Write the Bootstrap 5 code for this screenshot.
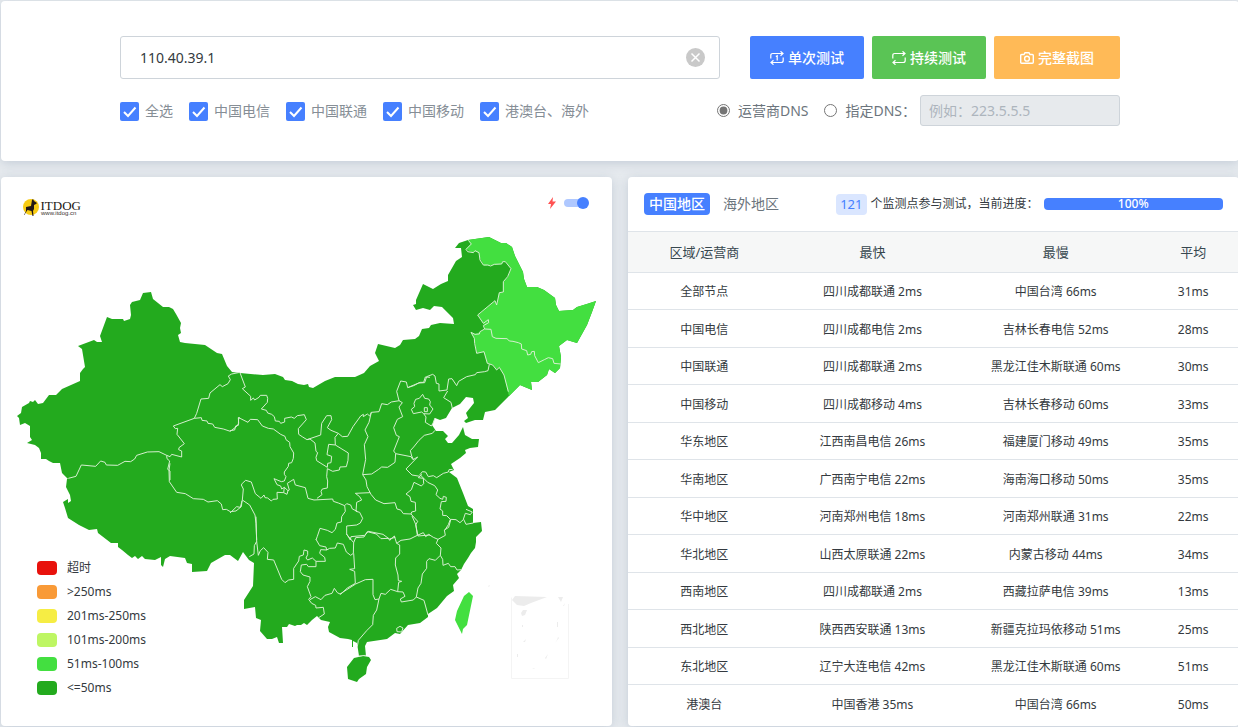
<!DOCTYPE html>
<html lang="zh-CN">
<head>
<meta charset="utf-8">
<meta name="viewport" content="width=device-width, initial-scale=1">
<title>ITDOG</title>
<link href="https://cdn.jsdelivr.net/npm/bootstrap@5.3.0/dist/css/bootstrap.min.css" rel="stylesheet">
<style>
body{font-family:"Noto Sans","Noto Sans CJK SC",sans-serif;font-size:14px;line-height:20px;background:#e7ebef;color:#343a40;overflow-x:hidden}
.page-wrap{margin:0 -1px 0 1px;padding:1px 0}
.panel{background:#fff;border-radius:4px;box-shadow:0 2px 12px rgba(110,130,155,.3)}
.search-panel{padding:35px 16px}
.search-inner{max-width:1000px}
.ip-box{flex:0 1 600px}
.ip-box .form-control{height:43px;padding:8px 48px 8px 19px;font-size:14px;border-color:#ced4da;border-radius:3px;color:#343a40}
.clear-btn{position:absolute;right:15px;top:12px;width:19px;height:19px;padding:0;border:0;background:none;display:flex}
.act{height:43px;border:0;border-radius:2px;color:#fff;font-size:14px;font-weight:500;display:inline-flex;align-items:center;gap:4px;padding:0 20px}
.act:hover{color:#fff}
.act-blue{background:#4680ff}.act-green{background:#5ac455}.act-gold{background:#ffba57;padding:0 26px}
.opts{min-height:31px;margin-top:16px}
.isp-list{padding-top:6px}
.opts label{color:#868e96}
.opts .dns{color:#6c757d}
.opts input[type=checkbox]{width:19px;height:19px;margin:0 6px 0 0;border:0;border-radius:2px}
.opts input[type=checkbox]:checked{background-color:#4680ff;background-image:url("data:image/svg+xml,%3csvg xmlns='http://www.w3.org/2000/svg' viewBox='0 0 19 19'%3e%3cpath d='M4 10l4 4 7.500-8.500' fill='none' stroke='white' stroke-width='2'/%3e%3c/svg%3e")}
.opts input[type=radio]{width:13px;height:13px;margin:0 8px 0 0;accent-color:#757575}
.dns-input{width:200px;height:31px;font-size:14px;padding:4px 8px;border-radius:3px;border-color:#ced4da}
.dns-input:disabled{background:#e7eaed}
.dns-input::placeholder{color:#adb5bd}
.map-tools{position:absolute;right:23px;top:19px;height:14px}
.map-switch{appearance:none;width:21px;height:8px;border-radius:4px;background:#afc8ff;position:relative;margin:0 4px 0 0}
.map-switch::after{content:"";position:absolute;right:-4px;top:-2px;width:12px;height:12px;border-radius:50%;background:#4680ff}
.legend-list{position:absolute;left:36px;bottom:26px;margin:0;font-size:12px;line-height:24px}
.swatch{width:20px;height:14px;border-radius:4px;margin-right:10px}
.stat-head{height:54px;padding:0 16px;font-size:12px}
.tab{border:0;height:22px;border-radius:4px;font-size:14px;line-height:20px;padding:0 5px;background:none;color:#6c757d}
.tab.active{background:#4680ff;color:#fff;font-weight:500}
.count{background:#dae6ff;color:#4680ff;border-radius:4px;font-size:13px;line-height:21px;padding:0 4px;margin-right:4px}
.prog{height:12px;flex:0 0 31%;margin-left:5px;overflow:visible}
.prog .progress-bar{background:#4680ff;border-radius:4px;font-size:12px;line-height:12px;font-weight:500;overflow:visible}
.stats{table-layout:fixed;text-align:center;font-size:12px;line-height:18px;--bs-table-bg:transparent}
.stats>:not(caption)>*>*{border-color:#dfe4e9;border-width:1px 0 0;padding:10px 4px 8px;color:#343a40;white-space:nowrap}
.stats>tbody>tr:nth-child(even)>*{padding-top:11px}
.stats>thead>tr>*{background:#f6f7f7;font-size:13px;font-weight:400;padding:11px 4px;color:#37474f}
.stats .w-a{width:25%}.stats .w-b{width:30%}.stats .w-c{width:15%}
.border-line{fill:none;stroke:#d5efcf;stroke-width:3;stroke-linejoin:round}
</style>
<script src="https://cdn.jsdelivr.net/npm/bootstrap@5.3.0/dist/js/bootstrap.bundle.min.js"></script>
</head>
<body>
<div class="page-wrap d-flex flex-column gap-3">
<form class="panel search-panel">
 <div class="search-inner mx-auto">
  <div class="d-flex flex-wrap justify-content-between">
   <div class="ip-box position-relative">
    <input class="form-control" type="text" value="110.40.39.1" aria-label="IP">
    <button class="clear-btn" type="button" aria-label="清除"><svg width="19" height="19" viewBox="0 0 19 19"><circle cx="9.500" cy="9.500" r="9.500" fill="#c9c9c9"/><path d="M5.500 5.500l8 8m0-8l-8 8" stroke="#fff" stroke-width="1.500"/></svg></button>
   </div>
   <div class="d-flex gap-2">
    <button class="btn act act-blue" type="button"><svg width="14" height="14" viewBox="0 0 14 14" fill="none" stroke="#fff" stroke-width="1.200"><path d="M.8 7.500V4.500Q.8 2.500 2.800 2.500H13M10.500.3L13 2.500L10.500 4.700M13.200 6.500v3q0 2-2 2H1M3.500 9.300L1 11.500l2.500 2.200M5.800 5.500L7.200 4.800V9.600"/></svg>单次测试</button>
    <button class="btn act act-green" type="button"><svg width="14" height="14" viewBox="0 0 14 14" fill="none" stroke="#fff" stroke-width="1.200"><path d="M.8 7.500V4.500Q.8 2.500 2.800 2.500H13M10.500.3L13 2.500L10.500 4.700M13.200 6.500v3q0 2-2 2H1M3.500 9.300L1 11.500l2.500 2.200"/></svg>持续测试</button>
    <button class="btn act act-gold" type="button"><svg width="14" height="14" viewBox="0 0 14 14" fill="none" stroke="#fff" stroke-width="1.400"><path d="M1.700 3.500H4L5 1.700H9L10 3.500H12.300Q13.300 3.500 13.300 4.500V11.300Q13.300 12.300 12.300 12.300H1.700Q.7 12.300.7 11.300V4.500Q.7 3.500 1.700 3.500Z"/><circle cx="7" cy="7.700" r="2.400"/></svg>完整截图</button>
   </div>
  </div>
  <div class="opts d-flex flex-wrap justify-content-between align-items-start">
   <div class="isp-list d-flex flex-wrap gap-3">
    <label class="d-flex align-items-center"><input class="form-check-input" type="checkbox" checked>全选</label>
    <label class="d-flex align-items-center"><input class="form-check-input" type="checkbox" checked>中国电信</label>
    <label class="d-flex align-items-center"><input class="form-check-input" type="checkbox" checked>中国联通</label>
    <label class="d-flex align-items-center"><input class="form-check-input" type="checkbox" checked>中国移动</label>
    <label class="d-flex align-items-center"><input class="form-check-input" type="checkbox" checked>港澳台、海外</label>
   </div>
   <div class="d-flex align-items-center">
    <label class="dns d-flex align-items-center me-3"><input type="radio" name="dns" checked>运营商DNS</label>
    <label class="dns d-flex align-items-center"><input type="radio" name="dns">指定DNS：</label>
    <input class="form-control dns-input ms-1" type="text" placeholder="例如：223.5.5.5" aria-label="指定DNS" disabled>
   </div>
  </div>
 </div>
</form>

<div class="row gx-3 gy-3">
<section class="col-12 col-lg-6">
 <div class="panel h-100 position-relative">
 <svg class="d-block w-100" viewBox="1 177 611 549" role="img" aria-label="中国地图">
  <circle cx="31" cy="207" r="8" fill="#f8cc14"/>
  <path d="M24 215l2-4v-4l5-1 1-6 1-1 1 2 3 2-1 1-2 1v4l-1 2 .5 5h-1l-1-5-4-1-2 3-1 2z" fill="#231815"/>
  <text x="40.500" y="210" font-family="Liberation Serif" font-size="13" fill="#231815">ITDOG</text>
  <text x="41" y="215" font-family="Liberation Sans" font-size="6" fill="#3b3330">www.itdog.cn</text>
  <path fill="#23aa1e" d="M68 479L62 473 60 463 53 463 49 461 46 459 41 459 41 453 39 448 35 445 31 444 27 443 32 440 30 437 30 426 25 423 20 425 19 418 17 416 21 413 22 407 29 403 30 401 33 402 35 400 38 404 43 403 49 395 56 395 62 389 80 381 80 373 83 369 85 367 82 349 78 346 94 340 97 342 102 342 100 336 107 317 112 319 123 319 124 321 130 319 131 315 130 305 132 302 140 300 143 293 151 292 153 299 158 303 163 307 169 307 173 309 176 314 181 323 180 328 181 333 178 335 180 342 185 343 205 345 217 353 222 354 227 366 232 372 240 373 263 375 275 374 283 377 285 380 292 381 298 384 304 385 308 384 309 387 313 388 325 381 335 377 355 377 364 373 370 366 379 361 375 353 378 344 395 348 400 345 403 340 415 339 419 336 422 329 429 328 431 325 440 323 454 324 453 318 442 307 434 306 430 310 423 308 416 310 413 305 416 304 416 300 423 284 433 289 441 284 448 281 448 275 456 261 462 257 461 248 455 248 459 243 468 240 489 237 501 243 506 243 512 247 515 256 523 272 524 279 527 287 537 287 544 290 555 298 556 305 559 311 573 310 577 307 587 304 596 301 592 312 587 325 577 343 567 340 559 346 561 357 560 368 555 373 549 369 547 375 538 382 531 382 532 390 520 385 509 396 495 410 485 412 483 420 475 420 466 423 464 421 468 418 466 413 474 403 473 398 466 397 460 404 452 408 446 418 440 420 435 418 432 425 436 431 443 431 448 436 445 439 448 443 452 443 459 435 463 427 465 435 472 439 479 439 478 447 470 448 465 450 466 453 460 458 451 464 454 470 449 472 457 478 463 493 468 506 473 509 473 523 481 522 482 531 476 537 476 542 475 548 471 553 468 558 464 564 461 570 457 574 459 578 453 585 454 591 447 596 437 608 428 614 428 617 420 623 408 625 400 634 395 633 387 639 367 642 365 646 366 656 359 656 357 643 353 641 353 647 352 647 352 640 348 639 340 638 329 632 328 627 330 622 321 620 317 616 312 620 307 625 304 623 301 625 297 625 295 626 289 624 287 627 282 627 283 643 279 643 277 637 272 639 267 639 260 631 261 620 256 618 255 607 244 609 244 600 253 586 254 563 249 560 243 552 238 561 230 555 225 555 211 563 207 571 192 572 192 564 187 563 185 558 170 556 165 559 163 567 161 565 161 557 155 560 145 559 142 556 138 559 135 556 132 558 128 555 122 550 118 547 118 543 111 543 98 533 97 529 89 530 79 525 68 518 65 508 63 502 68 499 68 503 71 501 70 495 66 487 67 479Z"/>
  <path fill="#43df40" d="M468 240L471 244 466 249 473 253 475 251 479 253 480 258 484 266 502 264 503 261 506 262 511 269 508 277 503 282 503 292 499 293 497 305 495 301 478 315 483 323 485 329 480 332 475 334 471 332 474 338 475 343 477 353 484 352 487 363 493 365 497 370 499 367 504 375 508 392 509 396 520 385 532 390 531 382 538 382 547 375 549 369 555 373 560 368 561 357 559 346 567 340 577 343 587 325 592 312 596 301 577 307 573 310 559 311 556 305 555 298 544 290 537 287 527 287 524 279 523 272 515 256 512 247 506 243 501 243 489 237Z"/>
  <path fill="#23aa1e" d="M354 658L363 656 369 657 371 660 367 667 366 674 359 679 357 682 348 679 347 667Z"/>
  <path fill="#43df40" d="M469 592L473 596 467 625 463 629 462 634 455 620 457 611 464 596Z"/>
  <!-- northwest -->
  <g class="border-line" transform="translate(10 280) scale(.33333)">
   <path d="M690 277L665 282 655 288 661 299 654 311 637 320 630 314 600 339 596 355 573 357 560 400 553 415 490 438 496 446 503 445 501 463 523 491 507 503 506 509 515 513 515 531 485 523 480 530 470 526 447 515 412 516 380 526 374 537 362 545 345 544 323 556 289 555 285 547 272 543 257 559 214 555 198 589 175 595M553 415L574 413 576 421 591 423 594 430 608 432 614 442 640 447 661 454 675 443 681 438 686 430 685 413 690 414M470 526L471 536 479 543 473 568 480 573 480 600"/>
  </g>
  <!-- central north -->
  <g class="border-line" transform="translate(230 340) scale(.33333)">
   <path d="M30 98L46 141 37 146 62 169 62 181 70 174 74 180 87 172 91 166 110 166 113 175 112 187 94 207 109 211 113 219 125 223 133 230 136 243 148 244 152 250 164 246 164 235 184 231 193 235 202 227 223 224 229 239 205 266 206 283 218 291 231 299 272 285 275 250 290 227 303 227 305 239 292 263 303 271 325 280 337 290 353 289 369 260 392 228 400 223 400 230 412 222 419 228 424 217 447 215 455 191 472 194 484 186 508 182"/>
   <path d="M0 272L14 270 17 258 25 256 26 233 54 247 61 238 83 239 97 258 115 265 130 267 152 283 165 289 168 299 179 307 180 320 191 339 190 355 185 368 176 370 175 379 163 396 163 403 168 410 163 423 154 425 132 416 141 434 152 438 155 447 163 442 161 458 141 457 142 477 129 478 124 483 113 474 105 473 102 465 93 475 76 461 64 426 47 421 37 430 34 435 40 447 37 480M163 442L174 452 171 463 161 458M174 452L178 450 172 430 191 418 196 435 226 443 234 475 252 480 308 477 310 484 325 489 344 497 350 491 362 495 367 507 382 514"/>
   <path d="M231 299L240 297 255 309 258 334 263 338 258 352 260 362 292 382 293 370 303 368 305 349 291 344 296 313 316 315 355 339 354 361 349 380 330 381 328 390 308 394 292 386 290 410 293 423 292 444 277 447 273 454 276 464 261 475M316 315L315 292 325 280M424 217L417 247 405 270 414 290 403 314 407 358 398 404M398 404L425 402 446 388 455 381 473 382 495 367 497 341 491 333 508 290 499 286 491 263 502 238 518 230 507 201 517 188 507 182 500 154 512 123 529 126 533 143 551 137 570 127 581 127 586 111 600 112"/>
   <path d="M497 341L543 350 549 359 563 351 528 387 546 405 570 409M398 404L408 420 411 440 423 463 437 480 462 491 495 488 501 507 512 510 520 521 543 522 545 516 557 513 556 487 543 484 540 470 528 462 544 449 552 427 574 438 581 431 580 415 565 413 576 403M420 458L376 460 389 470 395 480 380 487 378 514 389 517 398 535 391 549 380 555 350 558 350 582 361 600M344 497L346 514 335 530 334 546 321 549 316 568 306 578 292 571 270 565 262 589 258 600M543 522L563 544 557 555 564 588 600 585M37 480L31 502 20 500 0 519M37 480L59 495 75 525 78 550 80 600M361 600L363 590 404 586 415 574 459 583 478 597 496 592"/>
  </g>
  <!-- northeast -->
  <g class="border-line" transform="translate(360 230) scale(.33333)">
   <path d="M325 31L334 42 318 58 323 65 340 68 345 62 357 68 360 90 370 105 383 105 392 108 403 103 425 102 428 95 436 95 453 116 443 140 430 155 430 186 418 188 410 225 405 212 353 255 370 280 385 269 386 278 370 287 374 297 360 305 358 312 345 313 333 307 343 325 344 340 350 370 372 365 382 400 398 405 410 420 418 412 432 435 445 485M374 297L393 298 397 320 408 325 441 326 448 333 459 334 475 338 484 342 485 357 500 362 503 375 512 373 515 365 523 364 524 377 535 398 553 389 565 383 578 386 582 400 602 402M388 403L384 422 374 425 350 428 346 434 320 440 296 454 290 467 276 446 266 447 261 480 237 483 237 462 229 460 225 438 218 433 200 440 194 458 176 459 145 472"/>
   <path d="M263 483L251 503 273 517 277 535M188 493L194 505 206 507 211 515 209 525 219 537 209 552 191 551 185 546 160 551 154 538 164 530 162 520 167 508 178 505ZM191 551L198 561 196 577 214 588 219 580 225 564M193 533h9v12h-9z"/>
  </g>
  <!-- east coast -->
  <g class="border-line" transform="translate(360 370) scale(.33333)">
   <path d="M225 181L217 190 193 196 177 211 161 231 151 242 155 258 160 268M180 314L187 305 197 306 205 320 220 317 230 323 250 310 265 306 267 299 278 298M180 314L203 337 224 347 233 360 228 374 240 385 248 388 250 379 259 382 258 394 244 395 240 417 248 423 248 436 260 437 271 448 265 464 255 480M271 448L288 449 300 458 311 448 318 463 340 459M318 418L337 426 331 434 316 430 310 448"/>
  </g>
  <!-- southwest -->
  <g class="border-line" transform="translate(50 440) scale(.33333)">
   <path d="M360 70L357 92 358 125 380 157 406 161 430 176 460 178 474 186 502 182 514 192 518 209 529 208 541 215 558 213 574 200 576 183"/>
  </g>
  <g class="border-line" transform="translate(230 500) scale(.33333)">
   <path d="M78 50L80 124 73 137 72 162 58 170M80 124L85 166 91 152 101 143 114 157 112 178 131 180 155 238 165 248 176 240 191 238 191 205 206 183 208 169 220 165 222 150 233 153 233 164 228 174 233 180 247 174 258 184 258 200 235 200 230 193 214 195 211 215 219 225 240 231 240 244 232 260 243 290 236 298 245 310 257 316 258 324 280 322 283 342 266 353M258 118L269 137 288 141 290 150 272 149 269 160 284 172 286 184 258 184M290 150L299 145 316 144 322 129 340 133 349 156 362 166 370 160 371 128 349 102M371 160L374 206 359 208 374 214 376 250 352 264 332 283 322 278 313 265 306 280 285 286 273 299 256 290 240 299"/>
  </g>
  <!-- southeast -->
  <g class="border-line" transform="translate(340 500) scale(.33333)">
   <path d="M41 128L47 113 72 111 82 95 109 102 123 116 145 115 149 121 163 108 170 130 179 135 179 162 167 174 166 195 174 225 175 242 185 244 176 247 173 275 152 268 136 283 123 280 117 297 105 299 99 284 99 238 76 239 47 252 0 282M117 297L110 330 100 346 98 374 80 392 55 421 52 440M170 130L183 121 210 117 232 106 250 98 257 110 266 103 280 112 294 118 289 130 303 144 301 166 286 181 267 176 260 184 260 205 247 222 243 250 234 264 229 291 220 300 184 306 181 297 195 289 189 276 173 275M229 291L252 301 264 345M301 166L308 178 309 196 325 190 332 200 345 200 351 210 363 209M294 118L316 106 313 90 326 82 332 60M232 106L228 75 216 48M55 468L78 466M170 385L180 379 189 384 185 396 171 395Z"/>
  </g>
  <!-- islands inset -->
  <path d="M511.500 597.500V678.500H568.500V604" fill="none" stroke="#f4f4f4"/>
  <path fill="#ececec" d="M512 600L515 596 547 597 531 603 524 606 517 605ZM521 613l2-3 4 0-2 5-3 1zM558 597h5l-2 5zM557 622h1v5h-1zM557 640l1-3 1 1-4 5zM523 642l3-3-1 3zM545 658l3-4-2 5zM517 654h1v3h-1zM532 669l3-1-1 1zM563 606l2-3-1 3zM522 625h1v2h-1zM488 586l2-1-1 2z"/>
 </svg>
 <div class="map-tools d-flex align-items-center gap-2">
  <svg width="8" height="12" viewBox="0 0 8 12"><path d="M5 0L0 7H3L2 12 8 4.500H4.500Z" fill="#ff5252"/></svg>
  <input class="map-switch" type="checkbox" role="switch" aria-label="实时" checked>
 </div>
 <ul class="legend-list list-unstyled">
  <li class="d-flex align-items-center"><span class="swatch" style="background:#e8120c"></span>超时</li>
  <li class="d-flex align-items-center"><span class="swatch" style="background:#f99a37"></span>&gt;250ms</li>
  <li class="d-flex align-items-center"><span class="swatch" style="background:#f6ed44"></span>201ms-250ms</li>
  <li class="d-flex align-items-center"><span class="swatch" style="background:#bef663"></span>101ms-200ms</li>
  <li class="d-flex align-items-center"><span class="swatch" style="background:#43df40"></span>51ms-100ms</li>
  <li class="d-flex align-items-center"><span class="swatch" style="background:#23aa1e"></span>&lt;=50ms</li>
 </ul>
 </div>
</section>

<section class="col-12 col-lg-6">
 <div class="panel h-100 overflow-hidden">
 <div class="stat-head d-flex align-items-center text-nowrap">
  <button class="tab active" type="button">中国地区</button>
  <button class="tab ms-2 me-auto" type="button">海外地区</button>
  <span class="count">121</span><span>个监测点参与测试，当前进度：</span>
  <div class="progress prog" role="progressbar" aria-label="当前进度" aria-valuenow="100"><div class="progress-bar w-100">100%</div></div>
 </div>
 <table class="table stats mb-0">
  <thead><tr><th class="w-a">区域/运营商</th><th class="w-b">最快</th><th class="w-b">最慢</th><th class="w-c">平均</th></tr></thead>
  <tbody>
  <tr><td>全部节点</td><td>四川成都联通 2ms</td><td>中国台湾 66ms</td><td>31ms</td></tr>
  <tr><td>中国电信</td><td>四川成都电信 2ms</td><td>吉林长春电信 52ms</td><td>28ms</td></tr>
  <tr><td>中国联通</td><td>四川成都联通 2ms</td><td>黑龙江佳木斯联通 60ms</td><td>30ms</td></tr>
  <tr><td>中国移动</td><td>四川成都移动 4ms</td><td>吉林长春移动 60ms</td><td>33ms</td></tr>
  <tr><td>华东地区</td><td>江西南昌电信 26ms</td><td>福建厦门移动 49ms</td><td>35ms</td></tr>
  <tr><td>华南地区</td><td>广西南宁电信 22ms</td><td>海南海口移动 50ms</td><td>35ms</td></tr>
  <tr><td>华中地区</td><td>河南郑州电信 18ms</td><td>河南郑州联通 31ms</td><td>22ms</td></tr>
  <tr><td>华北地区</td><td>山西太原联通 22ms</td><td>内蒙古移动 44ms</td><td>34ms</td></tr>
  <tr><td>西南地区</td><td>四川成都联通 2ms</td><td>西藏拉萨电信 39ms</td><td>13ms</td></tr>
  <tr><td>西北地区</td><td>陕西西安联通 13ms</td><td>新疆克拉玛依移动 51ms</td><td>25ms</td></tr>
  <tr><td>东北地区</td><td>辽宁大连电信 42ms</td><td>黑龙江佳木斯联通 60ms</td><td>51ms</td></tr>
  <tr><td>港澳台</td><td>中国香港 35ms</td><td>中国台湾 66ms</td><td>50ms</td></tr>
  </tbody>
 </table>
 </div>
</section>
</div>
</div>
</body>
</html>
